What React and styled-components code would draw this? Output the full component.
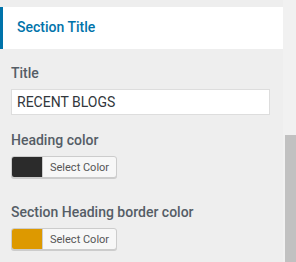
import React from 'react';
import styled, { createGlobalStyle } from 'styled-components';

const Global = createGlobalStyle`
  html, body {
    margin: 0;
    padding: 0;
    background: #eeeeee;
  }
  body {
    font-family: Roboto, "Noto Sans", "Liberation Sans", sans-serif;
  }
`;

const Screen = styled.div`
  display: flex;
  height: 262px;
  overflow: hidden;
`;

const Panel = styled.div`
  flex: 1;
  padding-top: 7px;
`;

const SectionHeader = styled.div`
  height: 42px;
  box-sizing: border-box;
  background: #ffffff;
  border-left: 3px solid #0073aa;
  padding: 0 0 2px 14px;
  display: flex;
  align-items: center;
  font-size: 14px;
  font-weight: 500;
  color: #0073aa;
`;

const Body = styled.div`
  padding: 14px 13px 0 11px;
`;

const Control = styled.div`
  margin-bottom: ${(p) => p.$gap || 14}px;
`;

const Label = styled.div`
  font-size: 14px;
  font-weight: 500;
  line-height: 20px;
  color: #555d66;
  margin-bottom: 6px;
`;

const TextInput = styled.input`
  display: block;
  width: 100%;
  box-sizing: border-box;
  height: 26px;
  padding: 0 5px;
  border: 1px solid #dddddd;
  background: #ffffff;
  font-family: inherit;
  font-size: 14px;
  color: #32373c;
  outline: none;
`;

const ColorButton = styled.button`
  display: inline-flex;
  align-items: stretch;
  box-sizing: border-box;
  height: 22px;
  padding: 0;
  border: 1px solid #cccccc;
  border-radius: 3px;
  background: #f7f7f7;
  overflow: hidden;
  box-shadow: 0 1px 0 #cccccc;
  font-family: inherit;
  cursor: pointer;
`;

const Swatch = styled.span`
  width: 30px;
  background: ${(p) => p.$color};
`;

const ButtonText = styled.span`
  display: flex;
  align-items: center;
  padding: 0 7px;
  border-left: 1px solid #cccccc;
  font-size: 11px;
  color: #555555;
`;

const Track = styled.div`
  width: 13px;
  background: #f1f1f1;
  display: flex;
  flex-direction: column;
`;

const Thumb = styled.div`
  flex: 1;
  margin: 135px 0 0 2px;
  background: #c1c1c1;
`;

const ColorPicker = ({ color }) => (
  <ColorButton type="button">
    <Swatch $color={color} />
    <ButtonText>Select Color</ButtonText>
  </ColorButton>
);

export default function App() {
  return (
    <Screen>
      <Global />
      <Panel>
        <SectionHeader>Section Title</SectionHeader>
        <Body>
          <Control $gap={15}>
            <Label>Title</Label>
            <TextInput defaultValue="RECENT BLOGS" />
          </Control>
          <Control $gap={21}>
            <Label>Heading color</Label>
            <ColorPicker color="#2b2b2b" />
          </Control>
          <Control>
            <Label>Section Heading border color</Label>
            <ColorPicker color="#dd9900" />
          </Control>
        </Body>
      </Panel>
      <Track>
        <Thumb />
      </Track>
    </Screen>
  );
}
